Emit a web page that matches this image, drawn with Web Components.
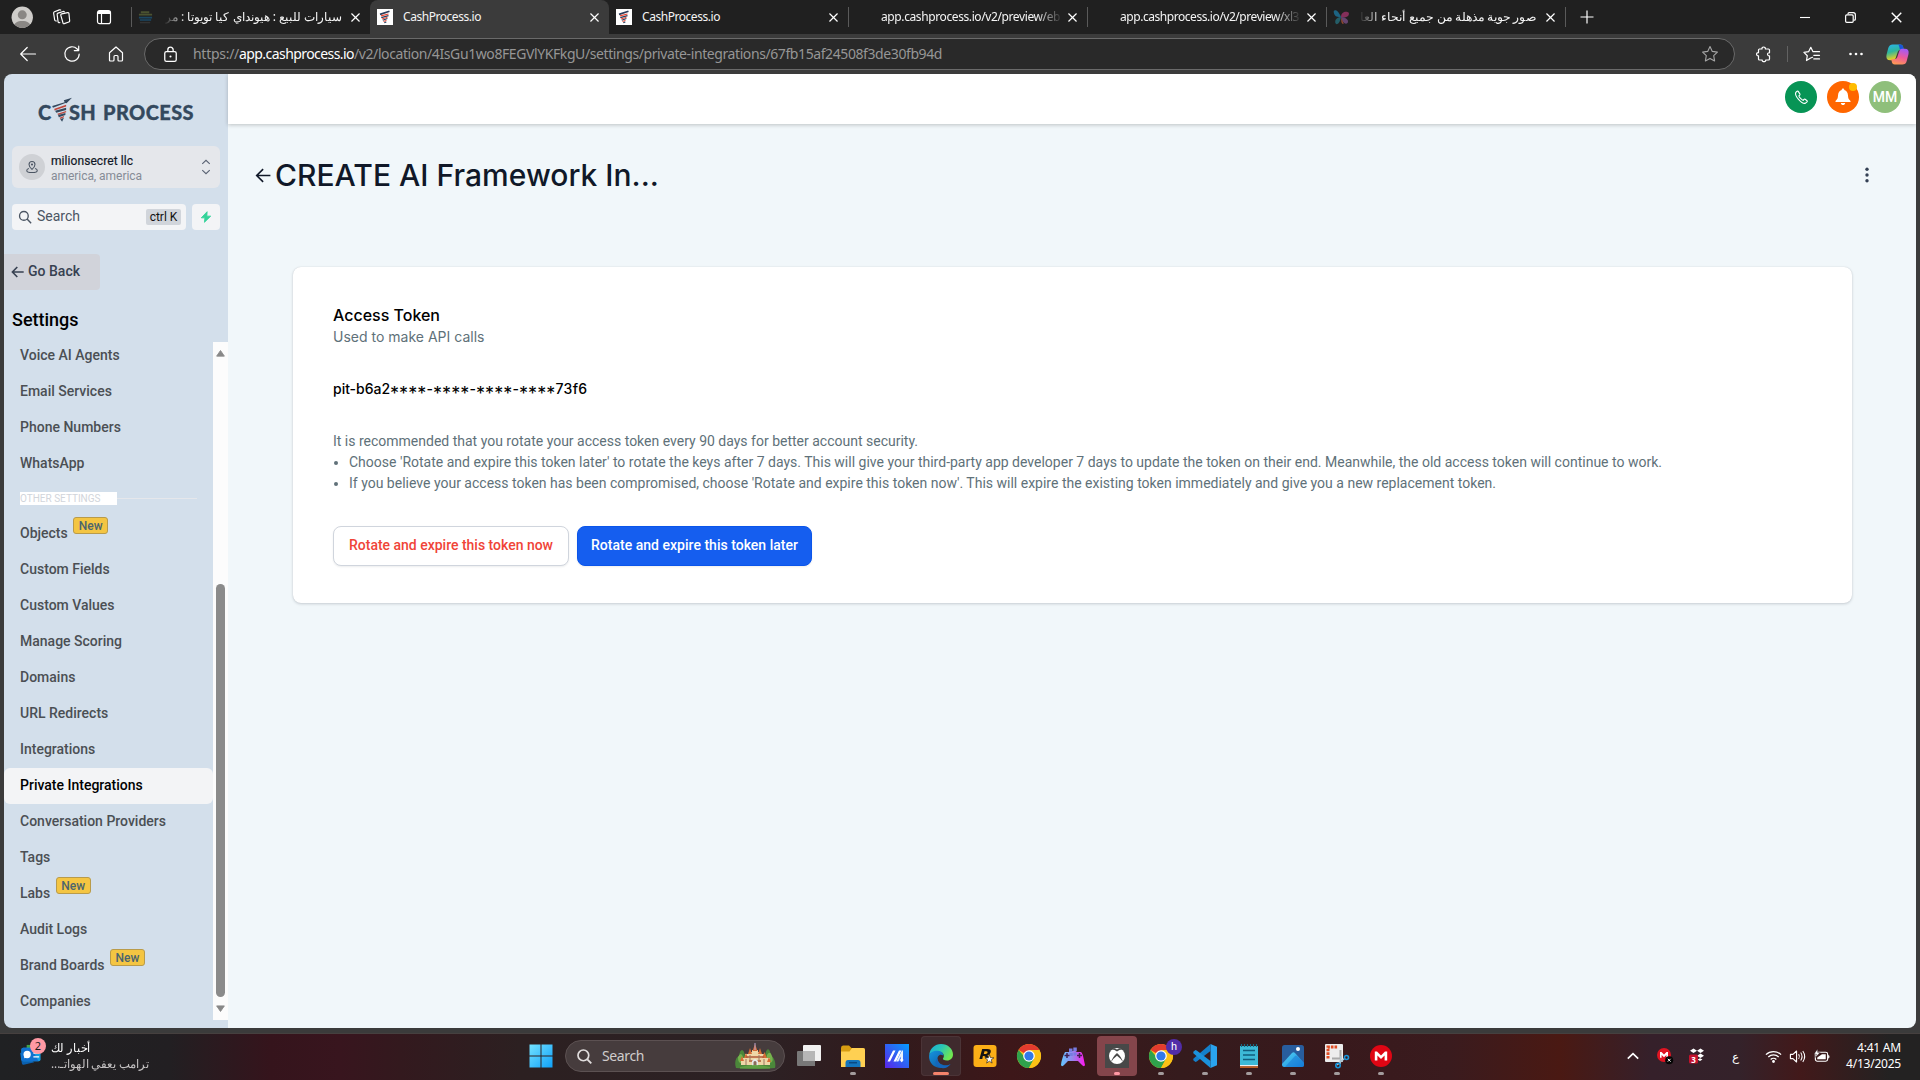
<!DOCTYPE html>
<html lang="en">
<head>
<meta charset="utf-8">
<title>CashProcess.io</title>
<style>
html,body{margin:0;height:100%;overflow:hidden;background:#3b3b3b}
body{font-family:Roboto,"Liberation Sans",sans-serif}
</style>
</head>
<body>
<desktop-screen></desktop-screen>
<script>
const ICONS = {
  avatar:['0 0 24 24','<defs><clipPath id="c"><circle cx="12" cy="12" r="11.4"/></clipPath></defs><circle cx="12" cy="12" r="11.4" fill="#cfcdca"/><g clip-path="url(#c)" fill="#8a8784"><circle cx="12" cy="9.4" r="4.8"/><path d="M3 25v-3c0-4 4-6 9-6s9 2 9 6v3z"/></g>'],
  workspaces:['0 0 16 16','<g fill="none" stroke="#fff" stroke-width="1.1" stroke-linejoin="round"><path d="M8.2 4.6 13.8 3.4q1-.2 1.2.8l.7 6.800q.1 1-.8 1.300l-4.300 1.500q-1 .3-1.200-.7L7.300 5.700q-.1-.9.900-1.100z"/><path d="M6.800 12.600 5.900 12.900q-.9.200-1.100-.7L3.900 5.200q-.1-1 .8-1.300L9.500 2.300q1-.3 1.300.9"/><path d="M3.600 11.300 2.700 11.300q-1 0-1.100-.9L.6 4q-.1-1 .8-1.400L6 .8q1-.3 1.500.5"/></g>'],
  vtabs:['0 0 16 16','<rect x="1.500" y="1.600" width="13" height="13" rx="2.200" fill="none" stroke="#fff" stroke-width="1.200"/><path d="M1.600 3.800a2.200 2.200 0 0 1 2.200-2.200h8.400a2.200 2.200 0 0 1 2.200 2.200V5H1.600z" fill="#fff"/><path d="M5.500 5v9.500" stroke="#fff" stroke-width="1.200"/>'],
  back:['0 0 18 18','<path d="M16.500 9H1.800M8.200 2.500 1.700 9l6.500 6.500" fill="none" stroke="#fff" stroke-width="1.200" stroke-linecap="round" stroke-linejoin="round"/>'],
  reload:['0 0 18 18','<path d="M16.200 9A7.200 7.200 0 1 1 14.200 4L15.500 5.500M15.700 1.200V5.600H11.300" fill="none" stroke="#fff" stroke-width="1.200" stroke-linecap="round" stroke-linejoin="round"/>'],
  home:['0 0 18 18','<path d="M2.500 7.800 9 2l6.500 5.800v7.200q0 1-1 1h-2.500q-1 0-1-1v-3.500q0-1-1-1H8q-1 0-1 1V15q0 1-1 1H3.500q-1 0-1-1z" fill="none" stroke="#fff" stroke-width="1.200" stroke-linejoin="round"/>'],
  lock:['0 0 16 16','<rect x="2.600" y="5.200" width="10.800" height="9.300" rx="1.600" fill="none" stroke="#fff" stroke-width="1.200"/><path d="M5.500 5V3.600a2.500 2.500 0 0 1 5 0V5" fill="none" stroke="#fff" stroke-width="1.200"/><circle cx="8" cy="9.900" r="1" fill="#fff"/>'],
  star:['0 0 18 18','<path d="M9 1.600l2.300 4.800 5.100.7-3.700 3.600.9 5.200L9 13.400 4.400 15.900l.9-5.200L1.600 7.100l5.100-.7z" fill="none" stroke="#a5a5a5" stroke-width="1.100" stroke-linejoin="round"/>'],
  puzzle:['0 0 18 18','<path d="M4 4h3c-.6-2.600 3.800-2.700 3.400 0h3.100q1 0 1 1v2.800c-2.600-.4-2.700 3.200 0 3V14q0 1-1 1h-2.800c.4 2.200-3.900 2.200-3.500 0H4.500q-1 0-1-1v-3.200c-2.500.3-2.600-3.500 0-3.200V5q0-1 1-1" fill="none" stroke="#fff" stroke-width="1.200" stroke-linejoin="round"/>'],
  favs:['0 0 18 18','<path d="M9.600 12.300 7.600 13l-4.100 2.500.8-4.800L.9 7.400l4.700-.7L7.800 2.300l2.200 4.400M10 6.700h6.500M10.800 10.300h5.700M10.800 13.900h5.700" fill="none" stroke="#fff" stroke-width="1.200" stroke-linejoin="round" stroke-linecap="round"/>'],
  dots:['0 0 18 18','<g fill="#fff"><circle cx="3.500" cy="9" r="1.300"/><circle cx="9" cy="9" r="1.300"/><circle cx="14.500" cy="9" r="1.300"/></g>'],
  copilot:['0 0 24 24','<defs><linearGradient id="a" x1="0" y1="0" x2=".3" y2="1"><stop offset="0" stop-color="#2ab4f2"/><stop offset=".5" stop-color="#2fb69b"/><stop offset="1" stop-color="#f5d11c"/></linearGradient><linearGradient id="b" x1=".6" y1="0" x2=".3" y2="1"><stop offset="0" stop-color="#a55af5"/><stop offset=".5" stop-color="#ee5a9b"/><stop offset="1" stop-color="#ff9a52"/></linearGradient></defs><path d="M7 1.500h8q2.200 0 2.800 2.200L18.500 7h-3q-2.500 0-3.200 2.200L10 16q-.8 2-2.600 2H4.500q-5 0-4-5.500l1.800-7Q3.300 1.500 7 1.500z" fill="url(#a)"/><path d="M12.500 1.500H15q2.200 0 2.800 2.200L18.500 7h-4q-1-5.500-2-5.500z" fill="#1a54d8"/><path d="M17 22.500H9q-2.200 0-2.800-2.200L5.500 17h3q2.500 0 3.200-2.200L14 8q.8-2 2.600-2h2.900q5 0 4 5.500l-1.800 7q-1 4-4.700 4z" fill="url(#b)"/>'],
  close:['0 0 12 12','<path d="M1.600 1.600l8.800 8.800M10.400 1.600 1.600 10.400" stroke="#fff" stroke-width="1.300"/>'],
  plus:['0 0 14 14','<path d="M7 .5v13M.5 7h13" stroke="#fff" stroke-width="1.200"/>'],
  min:['0 0 12 12','<path d="M1 6.500h10" stroke="#fff" stroke-width="1.100"/>'],
  restore:['0 0 12 12','<g fill="none" stroke="#fff" stroke-width="1.100"><rect x="1.500" y="3.500" width="7" height="7" rx="1"/><path d="M3.700 3V2.500q0-1 1-1h3.800q2 0 2 2v4q0 1-1 1H9"/></g>'],
  fav1:['0 0 16 16','<path d="M3 2.500h9v2H3zM1 5h14v1.800H1z" fill="#4a5230"/><path d="M1 8.200h14v1.800H1zM2 10.800h12v1.600H2z" fill="#1b4763"/><path d="M2 14.500h11" stroke="#333" stroke-width="1.500"/>'],
  cash:['0 0 16 16','<rect width="16" height="16" fill="#fff"/><path d="M3 5.400 12.500 2.300" stroke="#2b3d5c" stroke-width="1.700"/><path d="M4 6.900 11.500 5" stroke="#e8432f" stroke-width="1.200"/><path d="M4.300 8.700 11.500 6.600M5.800 11.200l4.600-1.700M7.300 13.700l2-.8" stroke="#2b3d5c" stroke-width="1.200"/><path d="M5 10l5.500-1.700M6.500 12.500l3-1.100" stroke="#e8432f" stroke-width="1"/>'],
  msn:['0 0 16 16','<path d="M8 8C5 0 0 0 .8 3.500 1.500 8 5 8 8 8z" fill="#1d6382"/><path d="M8 8C5.500 8 2 9.800 2.200 13c.3 4 4.500 2.500 5.800-5z" fill="#245d67"/><path d="M8 8c0-6 6-6 7.500-4.500S15 10 8 8z" fill="#842f5a"/><path d="M8 8c2 0 7 1.200 7 4.500S9.500 16 8 8z" fill="#65446f"/><path d="M8.200 8.600l2.500 6.200q-3 1-2.500-6.200z" fill="#914930"/>'],
  pin:['0 0 16 16','<g fill="none" stroke="#4b5563" stroke-width="1.200"><path d="M8 10.800S4.600 7.700 4.600 5.100a3.400 3.400 0 0 1 6.800 0C11.400 7.700 8 10.800 8 10.800z"/><path d="M4.500 9.700C3 10.100 2 10.900 2 11.900c0 1.500 2.700 2.400 6 2.400s6-.9 6-2.400c0-1-1-1.800-2.500-2.200"/></g><circle cx="8" cy="5.100" r="1.200" fill="#4b5563"/>'],
  updown:['0 0 12 18','<path d="M1.500 5.500 6 1.500l4.500 4M1.500 12.500l4.500 4 4.500-4" fill="none" stroke="#596273" stroke-width="1.400"/>'],
  search:['0 0 16 16','<circle cx="6.500" cy="6.500" r="4.800" fill="none" stroke="#4b5563" stroke-width="1.500"/><path d="M10 10l4.500 4.500" stroke="#4b5563" stroke-width="1.600"/>'],
  bolt:['0 0 14 14','<path d="M8.300.8 1.500 8h4.200l-.5 5.200L12.500 6H8z" fill="#34d399" stroke="#34d399" stroke-linejoin="round"/>'],
  goback:['0 0 14 14','<path d="M12.700 7H1.500M6.300 2 1.400 7l4.900 5" fill="none" stroke="#374151" stroke-width="1.600"/>'],
  arrow:['0 0 18 18','<path d="M16.300 9H2M8.600 2.200 1.800 9l6.800 6.800" fill="none" stroke="#101828" stroke-width="1.700"/>'],
  kebab:['0 0 18 18','<g fill="#344054"><circle cx="9" cy="3.300" r="1.700"/><circle cx="9" cy="9" r="1.700"/><circle cx="9" cy="14.700" r="1.700"/></g>'],
  phone:['0 0 16 16','<path d="M3 1.500 1.800 2.900c-1.300 3.200 6 11.900 10.100 11.400l2-1.600c.4-.4.400-.9 0-1.300l-2-1.500c-.5-.3-1-.2-1.300.2l-.8 1C8 10.600 5.700 7.800 5.200 6.200l.9-.8c.4-.4.400-.8.100-1.300L4.700 1.700c-.4-.6-1.100-.7-1.700-.2z" fill="none" stroke="#fff" stroke-width="1.200" stroke-linejoin="round"/>'],
  bell:['0 0 18 18','<path d="M9 .6c.9 0 1.300.6 1.300 1.400 2.500.8 3.500 2.700 3.700 5.500.1 2.700.7 3.900 2.500 5.500v1H1.500v-1c1.800-1.600 2.400-2.800 2.500-5.500.2-2.800 1.200-4.700 3.700-5.500C7.700 1.200 8.100.6 9 .6zM6.800 15h4.400c-.3 1.400-1 2-2.200 2s-1.900-.6-2.200-2z" fill="#fff"/>'],
  up:['0 0 10 8','<path d="M5 .6 9.300 7H.7z" fill="#888" stroke="#888" stroke-linejoin="round"/>'],
  down:['0 0 10 8','<path d="M5 7.400 9.300 1H.7z" fill="#888" stroke="#888" stroke-linejoin="round"/>'],
  widgets:['0 0 24 24','<path d="M8 2h12v8H8z" fill="#43a047"/><path d="M1 10 3 21q.3 2 2 1.700L16 20z" fill="#0b5fae"/><rect x="2.500" y="5" width="20" height="14" rx="2" fill="#149de0"/><path d="M4.500 5h8l8 14h-16a2 2 0 0 1-2-2V7a2 2 0 0 1 2-2z" fill="#1070cf"/><circle cx="8.500" cy="12" r="3.800" fill="#fff"/><path d="M5.500 12v4l4-1z" fill="#fff"/><path d="M15 10.500h6M15 14.500h6" stroke="#fff" stroke-width="1.500"/>'],
  windows:['0 0 24 24','<defs><linearGradient id="w" x1="0" y1="0" x2="1" y2="1"><stop offset="0" stop-color="#74e2ff"/><stop offset="1" stop-color="#0fa0f8"/></linearGradient></defs><path d="M.5.500h11v11H.5zM12.500.500h11v11h-11zM.5 12.500h11v11H.5zM12.500 12.500h11v11h-11z" fill="url(#w)"/>'],
  tsearch:['0 0 18 18','<circle cx="7.800" cy="7.800" r="5.700" fill="none" stroke="#e1dddd" stroke-width="1.800"/><path d="M12 12l4.200 4.200" stroke="#e1dddd" stroke-width="2"/>'],
  castle:['0 0 42 26','<path d="M2 25C0 19 2 14 5 13c1-8 5-8 6 0h20c1-9 5-9 6 0 4 2 5 8 4 12q-20 2-39 0z" fill="#4b873a"/><path d="M4 14q3-6 5 0 3 5-1 6t-4-6zM33 12q3-5 5 1 2 6-2 7t-3-8z" fill="#76b34d"/><path d="M7 22v-7h4v-4h4V9h3V7h6v2h3v2h4v4h5v7z" fill="#eed7a7"/><path d="M10 15l2-5 2 5zM14 11l2-6 2 6zM18.500 8 21 1l2.500 7zM24 11l2-6 2 6zM28 15l2.500-6 2.500 6zM6 18l2-5 2 5zM33 19l2-5 2 5z" fill="#d66c35"/><path d="M21 0v7" stroke="#b7a3d1" stroke-width="1"/><path d="M12 14h18M15 18h12" stroke="#b35b3a" stroke-width="1.500"/><path d="M12 16v6M16 12v5M25 12v5M30 16v6" stroke="#9b7862"/><path d="M18 24v-6q3-4 6 0v6z" fill="#e5e8ea"/><path d="M19.500 22v-3q1.500-2 3 0v3z" fill="#8b6c58"/><path d="M6 24q15-4 30 0v1.500H6z" fill="#61a044"/>'],
  taskview:['0 0 24 24','<rect x="6" y="1" width="18" height="16" rx="1" fill="#f1f1f1"/><path d="M1 7h17v15H1q-1 0-1-1V8q0-1 1-1z" fill="#787878"/><path d="M6 7h12v10H6z" fill="#b6b6b6"/>'],
  folder:['0 0 24 24','<path d="M0 4q0-2.500 2-2.500h6L10.500 4H22q2 0 2 2v8H0z" fill="#d89d12"/><path d="M0 7.500h8.500L11 4h11q2 0 2 2v17H0z" fill="#ffd052"/><path d="M4.500 23v-4q0-3 2.500-3h10q2.500 0 2.500 3v4z" fill="#1475bd"/><path d="M8 18.700h8" stroke="#0a4a83" stroke-width="1.500"/>'],
  ma:['0 0 24 24','<defs><linearGradient id="m" x1="0" y1="1" x2="1" y2="0"><stop offset="0" stop-color="#5b25e8"/><stop offset="1" stop-color="#049dff"/></linearGradient></defs><path d="M0 0h24v24H0z" fill="url(#m)"/><path d="M2.500 17.500 8 6.500h2.500l-5.500 11zM8.500 17.500 14 6.500h2.500l-5.500 11z" fill="#fff"/><path d="M18 6.500v11h-2.300v-5l-2.300 5h-2.200L17 6.500z" fill="#e8f2ff"/><path d="m16.500 13.500.7 1.800 1.800.7-1.800.7-.7 1.800-.7-1.800-1.800-.7 1.800-.7z" fill="#fff"/>'],
  edge:['0 0 24 24','<defs><linearGradient id="e" x1="0" y1="0" x2="1" y2=".5"><stop offset="0" stop-color="#18a9dc"/><stop offset=".5" stop-color="#2ac7b5"/><stop offset="1" stop-color="#70e751"/></linearGradient><linearGradient id="f" x1="0" y1="0" x2="1" y2="1"><stop offset="0" stop-color="#1595df"/><stop offset="1" stop-color="#0d4d99"/></linearGradient></defs><path d="M.2 11C1 4 6 0 12 0c7 0 12 5 12 10.500 0 3.500-2.500 6-6 6-3 0-4.500-1.200-4-2 2-2.700.5-6-3-6.500C6.500 7.500 2 8 .2 11z" fill="url(#e)"/><path d="M.1 11.500C1 8.500 4.500 6.500 9 6.800c3.500.2 5.500 2.400 5.300 4.700C10.500 9 8 12.500 8.600 15.500 9.200 19 13 21.500 17 21.300c1.500 0 3-.6 4.300-1.100C19 23 15.800 24 12 24 5 24-.5 18.500.1 11.500z" fill="url(#f)"/><path d="M8.500 14.500c-.2 4.500 4 7.500 8.500 7 2-.2 3.600-.8 4.700-1.600C18.500 24.500 13 25.500 9 22.500c-3-2.500-3-6-.5-8z" fill="#1565ba"/>'],
  rockstar:['0 0 24 24','<rect x=".5" y="1" width="23" height="22" rx="3" fill="#fcaf17"/><path d="M9.200 5h5q4.600 0 3.400 3.400-.7 2.300-3.200 2.900 1.200.8 1 2.800h-2.900q.2-2.200-1.700-2.200h-.9L9.300 15H6.400zM11.500 7.300l-.7 2.600h2.100q1.900-.2 1.700-1.600-.1-1-1.400-1z" fill="#161313" fill-rule="evenodd"/><path d="m16.500 10.500 1 3.200 3.400.1-2.700 2 .9 3.300-2.700-1.900-2.800 1.900 1-3.300-2.700-2h3.500z" fill="#fff" stroke="#161313" stroke-width=".6"/>'],
  chrome:['0 0 24 24','<circle cx="12" cy="12" r="12" fill="#fbc116"/><path d="M12 12 1.600 6A12 12 0 0 1 22.400 6z" fill="#e33b2e"/><path d="M12 12H6.800L1.600 6A12 12 0 0 0 12 24l4.800-9z" fill="#2fa24c"/><path d="M12 6h10.400A12 12 0 0 1 12 24l5.200-9z" fill="#fbc116"/><circle cx="12" cy="12" r="5.800" fill="#fff"/><circle cx="12" cy="12" r="4.600" fill="#3179ea"/>'],
  gamepad:['0 0 24 24','<defs><linearGradient id="g"><stop offset="0" stop-color="#62c7ff"/><stop offset=".5" stop-color="#9a83ed"/><stop offset="1" stop-color="#ff16ef"/></linearGradient></defs><path d="M4 8h4.500l2-1h4l1.500 1H20q1.500 1 2.500 6t1.500 7q-.5 2-2.500.5L17 17H7l-4.500 4.500Q.5 23 0 21q.2-3 1.500-7T4 8z" fill="url(#g)"/><path d="M8 4.500h3.500V8H8zM12.300 3.500h3.500V7h-3.500zM8.500 9h3.300v3H8.500zM12.500 8.500h3v3h-3z" fill="#777ce2"/><path d="M6 9v5M3.500 11.500h5M18.500 9v5M16 11.500h5" stroke="#402052" stroke-width="1.500"/>'],
  xbox:['0 0 24 24','<path d="M0 0h24v24H0z" fill="#484848"/><circle cx="12" cy="12" r="8" fill="#fff"/><path d="M6.800 5.600q2.400-.2 5.200 2 2.800-2.200 5.200-2-2-1.600-2.800-1.300L12 5.500 9.600 4.300q-.8-.3-2.800 1.300z" fill="#484848"/><path d="M6 18.300q1.500-5.500 6-9.300 4.500 3.800 6 9.300-2-3.800-6-6.600-4 2.800-6 6.600z" fill="#484848"/>'],
  vscode:['0 0 24 24','<path d="M17.500 0 24 2.800v18.400L17.500 24z" fill="#2aa3ee"/><path d="M17.500 0v7L3.700 17.500 2.500 18 .3 16.200v-1.400z" fill="#1480cb"/><path d="M17.500 24v-7L3.700 6.500 2.500 6 .3 7.800v1.400z" fill="#1b92dc"/>'],
  notepad:['0 0 24 24','<path d="M3 2h18v19H3z" fill="#3db9d7"/><path d="M3 21h18v1.500H3z" fill="#eee"/><path d="M3 22.300h18V24H3z" fill="#bc5d22"/><path d="M6 6.500h12M6 11h12M6 15.500h12" stroke="#115d7d" stroke-width="1.400"/><path d="M4.500 0v3M7.500 0v3M10.500 0v3M13.500 0v3M16.500 0v3M19.500 0v3" stroke="#176983" stroke-width="1.200"/>'],
  photos:['0 0 24 24','<defs><linearGradient id="p" x1="0" y1="0" x2="1" y2="1"><stop offset="0" stop-color="#55d5f4"/><stop offset="1" stop-color="#1484df"/></linearGradient></defs><rect x="1" y="1" width="22" height="22" rx="2.500" fill="#285d9e"/><path d="M1 20 11 9q1.500-1.500 3 0l9 10v1.500q0 2.500-2.500 2.500h-17Q1 23 1 20z" fill="url(#p)"/><path d="M4 23 14 12q1-1 2 0l7 7v1.500q0 2.500-2.500 2.500z" fill="#1576d2" opacity=".5"/><circle cx="17" cy="5" r="2" fill="#fff"/>'],
  snip:['0 0 24 24','<rect x="0" y="0" width="18" height="18" rx="1" fill="#ededed"/><path d="M3 14.500V3h10" fill="none" stroke="#df4d26" stroke-width="3" stroke-dasharray="2.600 1"/><path d="M7 14.500h8.500V6" fill="none" stroke="#aaa" stroke-width="2"/><path d="M12 21l8-7M16 12l-1 8" stroke="#aac4d2" stroke-width="1.500"/><circle cx="13" cy="21.500" r="2.200" fill="none" stroke="#1795db" stroke-width="1.600"/><circle cx="21.500" cy="13.500" r="2" fill="none" stroke="#1795db" stroke-width="1.600"/>'],
  mega:['0 0 24 24','<circle cx="12" cy="12" r="11" fill="#df0614"/><path d="M5.800 16.500v-9H8l4 4 4-4h2.200v9h-2.600v-5L12 15l-3.600-3.500v5z" fill="#fff"/>'],
  chev:['0 0 14 14','<path d="m1.800 9.600 5.200-5 5.200 5" fill="none" stroke="#fff" stroke-width="1.700"/>'],
  megaoff:['0 0 18 18','<circle cx="8" cy="8" r="7" fill="#e01422"/><path d="M4 10.700V5h1.500L8 7.500 10.500 5H12v5.700h-1.600V7.900L8 10.200 5.600 7.900v2.800z" fill="#fff"/><circle cx="13.200" cy="13.200" r="4" fill="#050505"/><path d="m11.800 11.800 2.800 2.800m0-2.800-2.800 2.800" stroke="#fff" stroke-width="1"/>'],
  dropbox:['0 0 18 18','<path d="M5.500 1.500 9 3.700 5.500 6 2 3.700zM12.500 1.500 16 3.700 12.500 6 9 3.700zM12.500 6.500 16 8.800 12.500 11 9 8.800zM9.500 12.500l2.500-1.200 2.500 1.200-2.500 1.500z" fill="#fff"/><rect x="1" y="7.500" width="9" height="9" rx="1.500" fill="#c4122c"/>'],
  wifi:['0 0 18 18','<path d="M1 7a11.500 11.500 0 0 1 16 0M3.500 9.600a7.900 7.900 0 0 1 11 0M6 12.200a4.300 4.300 0 0 1 6 0" fill="none" stroke="#fff" stroke-width="1.400"/><circle cx="9" cy="14.300" r="1.500" fill="#fff"/>'],
  sound:['0 0 18 18','<path d="M1.500 6.800h2.700L8 3.200v11.600l-3.800-3.600H1.500z" fill="none" stroke="#fff" stroke-width="1.200" stroke-linejoin="round"/><path d="M10.200 6.500q1.600 2.500 0 5M12.400 4.800q2.800 4.200 0 8.400M14.600 3.200q4 5.800 0 11.600" fill="none" stroke="#fff" stroke-width="1.100"/>'],
  battery:['0 0 18 18','<rect x="2.500" y="4.500" width="13" height="9.500" rx="2" fill="none" stroke="#fff" stroke-width="1.200"/><path d="M9.500 6.500h4v5.500H4.500v-2zM16 7.500q1.500.2 1.500 1.800T16 11z" fill="#fff"/><path d="M4.800 1 1 6.500h2.500L2.500 10 7.500 4.800H5z" fill="#fff" stroke="#30171b" stroke-width=".5"/>'],
  logo:['0 0 30 36','<path d="m3 13 17-5.500-1.200-2.800L30 1l-7.500 8-1.500-.5L4 15.500z" fill="#34495e"/><path d="M6 17 22 11v2.500L6 19.500z" fill="#c0473c"/><path d="m7 19.800 15-4.300v3.300L8.500 22.500z" fill="#34495e"/><path d="m10 24 12-4v1.800l-11 4z" fill="#c0473c"/><path d="m11 26 10-3v3L12 29z" fill="#34495e"/><path d="m13 30 6-2.500V29l-5 2.500z" fill="#c0473c"/><path d="m14 32 5-2-2.500 5.500z" fill="#34495e"/>']
};
function define(name, markup, setup){
  const t=document.createElement('template'); t.innerHTML=markup;
  customElements.define(name, class extends HTMLElement{
    constructor(){ super(); this.attachShadow({mode:'open'}).append(t.content.cloneNode(true)); }
    connectedCallback(){ if(setup && !this.ready){ this.ready=true; setup(this,this.shadowRoot); } }
  });
}
const UI='"Noto Sans","Open Sans",sans-serif';

/* name, w, h: one glyph from the ICONS table */
define('ui-icon','<style>:host{display:block;flex:none}svg{display:block;width:100%;height:100%;overflow:visible}</style>',(el,root)=>{
  const [vb,body]=ICONS[el.getAttribute('name')]; const w=el.getAttribute('w')||16, h=el.getAttribute('h')||w;
  el.style.width=w+'px'; el.style.height=h+'px';
  root.innerHTML+=`<svg viewBox="${vb}" preserveAspectRatio="none">${body}</svg>`;
});
/* w: line width in px; tracking adapts to it, joined scripts are scaled */
define('fit-text','<style>:host{display:block;flex:none;white-space:pre}span{display:inline-block;white-space:pre;transform-origin:0 50%}:host([right]) span{transform-origin:100% 50%}</style><span><slot></slot></span>',(el,root)=>{
  const s=root.querySelector('span'), w=+el.getAttribute('w'); el.style.width=w+'px';
  const nat=s.getBoundingClientRect().width, n=[...el.textContent].length;
  if(el.hasAttribute('scale')) s.style.transform=`scaleX(${w/nat})`;
  else s.style.letterSpacing=((w-nat)/n)+'px';
});

define('browser-tab',`<style>
:host{display:flex;box-sizing:border-box;width:239px;height:34px;padding-left:7px;align-items:center;flex:none;color:#f4f4f4;font:12px/18px ${UI}}
.icon{width:16px;height:16px;margin-right:10px;flex:none}
.t{width:180px;overflow:hidden;flex:none}
:host([fade]) .t{-webkit-mask-image:linear-gradient(90deg,#000 155px,transparent 182px)}
:host([rtl]) .t{margin-left:1px;width:179px;-webkit-mask-image:linear-gradient(270deg,#000 158px,transparent 180px)}
:host([active]){background:#3b3b3b;border-radius:8px 8px 0 0;}
i{width:1px;height:20px;background:#5a5a5a;margin-left:auto;margin-right:-1px}
:host([nosep]) i{display:none}
ui-icon{flex:none}.x{margin-left:6px}
</style><div class="icon"><slot name="icon"></slot></div><div class="t"><slot></slot></div><ui-icon class="x" name="close" w="11"></ui-icon><i></i>`);

define('title-bar',`<style>
:host{display:flex;height:34px;background:#202020;align-items:center}
.lead{display:flex;width:131px;align-items:center;box-sizing:border-box;padding-left:11px;flex:none}
.lead ui-icon{flex:none}.lead i{width:1px;height:20px;background:#5a5a5a;margin-left:auto;margin-right:-1px}
.win{display:flex;margin-left:auto;padding-right:17px;gap:33px;align-items:center}
</style>
<div class="lead"><ui-icon name="avatar" w="22.500"></ui-icon><ui-icon name="workspaces" w="17" style="margin-left:19px"></ui-icon><ui-icon name="vtabs" w="16" style="margin-left:26px"></ui-icon><i></i></div>
<browser-tab rtl nosep><ui-icon slot="icon" name="fav1" w="15"></ui-icon><fit-text w="177" scale dir="rtl" style="direction:ltr">سيارات للبيع : هيونداي كيا تويوتا : مر</fit-text></browser-tab>
<browser-tab active nosep><ui-icon slot="icon" name="cash"></ui-icon><fit-text w="78">CashProcess.io</fit-text></browser-tab>
<browser-tab><ui-icon slot="icon" name="cash"></ui-icon><fit-text w="78">CashProcess.io</fit-text></browser-tab>
<browser-tab fade><fit-text w="179">app.cashprocess.io/v2/preview/eb</fit-text></browser-tab>
<browser-tab fade><fit-text w="179">app.cashprocess.io/v2/preview/xl3</fit-text></browser-tab>
<browser-tab rtl><ui-icon slot="icon" name="msn"></ui-icon><fit-text w="176" scale style="direction:ltr">صور جوية مذهلة من جميع أنحاء العا</fit-text></browser-tab>
<ui-icon name="plus" w="14" style="margin-left:15px"></ui-icon>
<div class="win"><ui-icon name="min" w="12"></ui-icon><ui-icon name="restore" w="13"></ui-icon><ui-icon name="close" w="13"></ui-icon></div>`);

define('address-bar',`<style>
:host{display:flex;height:40px;background:#3b3b3b;align-items:center;padding-left:19px}
.nav{display:flex;gap:26px;width:125px;flex:none}
.url{display:flex;box-sizing:border-box;width:1591px;height:32px;border:1px solid #6a6a6a;border-radius:16px;background:#292929;align-items:center;padding:0 15px 0 17px;font:14px/20px ${UI};color:#969696;flex:none}
.right{display:flex;align-items:center}
</style>
<div class="nav"><ui-icon name="back" w="18"></ui-icon><ui-icon name="reload" w="18"></ui-icon><ui-icon name="home" w="18"></ui-icon></div>
<div class="url"><ui-icon name="lock" w="17" style="margin-right:14px"></ui-icon><fit-text w="46">https://</fit-text><fit-text w="115" style="color:#fff">app.cashprocess.io</fit-text><fit-text w="588">/v2/location/4IsGu1wo8FEGVlYKFkgU/settings/private-integrations/67fb15af24508f3de30fb94d</fit-text><ui-icon name="star" w="18" style="margin-left:auto"></ui-icon></div>
<div class="right"><ui-icon name="puzzle" w="18" style="margin-left:20px"></ui-icon><i style="width:1px;height:16px;background:#626262;margin:0 15px 0 14px"></i><ui-icon name="favs" w="18"></ui-icon><ui-icon name="dots" w="18" style="margin-left:26px"></ui-icon><ui-icon name="copilot" w="23" style="margin-left:21px"></ui-icon></div>`);

define('nav-item',`<style>
:host{display:flex;box-sizing:border-box;height:36px;align-items:center;padding:0 0 2px 16px;font:500 14px/20px Roboto,sans-serif;color:#4b4f54;border-radius:6px;flex:none}
:host([active]){background:#f3f4f6;color:#000}
b{display:none;align-self:flex-start;box-sizing:border-box;height:17px;width:35px;text-align:center;margin:1px 0 0 5.500px;border:1px solid #b99b4a;border-radius:3px;background:#f4c542;color:#4b646e;font:500 12px/16px Roboto,sans-serif}
:host([new]) b{display:block}
</style><slot></slot><b>New</b>`);

define('side-bar',`<style>
:host{display:flex;flex-direction:column;width:224px;background:#d3dfeb;flex:none;box-sizing:border-box}
.logo{display:flex;height:24px;margin:24px 0 0 34px;align-items:flex-end;color:#34495e;font:900 20px/18px Lato,sans-serif;-webkit-text-stroke:.3px #34495e}
.logo fit-text{margin-bottom:1px}
.loc{display:flex;box-sizing:border-box;width:208px;height:42px;margin:24px 0 0 8px;padding:0 9px 0 7px;border-radius:6px;background:#e5e7eb;align-items:center;font:12px/15px Roboto,sans-serif;color:#858b96}
.pin{width:26px;height:26px;border-radius:50%;background:#cfd1d5;display:grid;place-items:center;margin-right:6px}
.find{display:flex;margin:16px 0 0 8px;gap:6px}
.box{display:flex;box-sizing:border-box;height:26px;border-radius:4px;background:#f3f4f6;align-items:center;font:14px/20px Roboto,sans-serif;color:#4b5563}
kbd{box-sizing:border-box;width:35px;height:16px;border-radius:2px;background:#d1d5db;color:#111;font:12px/16px Roboto,sans-serif;text-align:center;margin-left:auto}
.back{display:flex;box-sizing:border-box;width:96px;height:36px;margin-top:24px;padding:0 0 2px 7px;gap:3px;border-radius:0 4px 4px 0;background:#d1d3da;align-items:center;font:500 14px/20px Roboto,sans-serif;color:#374151}
.back ui-icon{position:relative;top:1px}
h2{margin:18px 0 0 8px;height:34px;font:500 18px/24px Roboto,sans-serif;color:#000}
.scroll{display:flex;height:678px;overflow:hidden}
.list{display:flex;flex-direction:column;width:209px;margin-top:-4px}
.div{display:flex;box-sizing:border-box;height:34px;align-items:center;padding:0 16px 1px;flex:none}
.div span{width:97px;height:13px;background:#fff;font:10px/13px Roboto,sans-serif;color:#d1d5db}
.div i{flex:1;height:1px;background:#e5e7eb}
.bar{display:flex;flex-direction:column;width:15px;background:#fcfcfc;align-items:center;box-sizing:border-box;padding:8px 0;height:678px}
.thumb{width:9px;height:413px;border-radius:5px;background:#8b8b8b;margin:auto 0 8px}
</style>
<div class="logo"><fit-text w="13">C</fit-text><ui-icon name="logo" w="22" h="25" style="margin:0 -3px 0 -1px"></ui-icon><fit-text w="27">SH</fit-text><fit-text w="91" style="margin-left:7px">PROCESS</fit-text></div>
<div class="loc"><div class="pin"><ui-icon name="pin" w="14"></ui-icon></div><div style="padding-top:3px"><fit-text w="82" style="color:#111827;-webkit-text-stroke:.2px #111827">milionsecret llc</fit-text><fit-text w="91">america, america</fit-text></div><ui-icon name="updown" w="10" h="16" style="margin-left:auto;margin-right:0"></ui-icon></div>
<div class="find"><div class="box" style="width:174px;padding:0 5px 0 6px"><ui-icon name="search" w="14.500" style="margin-right:4.500px"></ui-icon><fit-text w="43" style="padding-bottom:2px">Search</fit-text><kbd>ctrl K</kbd></div><div class="box" style="width:28px;justify-content:center"><ui-icon name="bolt" w="12"></ui-icon></div></div>
<div class="back"><ui-icon name="goback" w="14"></ui-icon><fit-text w="52">Go Back</fit-text></div>
<h2><fit-text w="66.500">Settings</fit-text></h2>
<div class="scroll"><div class="list">
<nav-item>Voice AI Agents</nav-item><nav-item>Email Services</nav-item><nav-item>Phone Numbers</nav-item><nav-item>WhatsApp</nav-item>
<div class="div"><span><fit-text w="80.500">OTHER SETTINGS</fit-text></span><i></i></div>
<nav-item new>Objects</nav-item><nav-item>Custom Fields</nav-item><nav-item>Custom Values</nav-item><nav-item>Manage Scoring</nav-item><nav-item>Domains</nav-item><nav-item>URL Redirects</nav-item><nav-item>Integrations</nav-item><nav-item active>Private Integrations</nav-item><nav-item>Conversation Providers</nav-item><nav-item>Tags</nav-item><nav-item new>Labs</nav-item><nav-item>Audit Logs</nav-item><nav-item new>Brand Boards</nav-item><nav-item>Companies</nav-item>
</div><div class="bar"><ui-icon name="up" w="9" h="7"></ui-icon><div class="thumb"></div><ui-icon name="down" w="9" h="7"></ui-icon></div></div>`);

define('round-button',`<style>
:host{display:grid;place-items:center;width:32px;height:32px;border-radius:50%;background:var(--bg);color:#fff;font:500 14px/32px Roboto,sans-serif;position:relative}
.dot{display:none;position:absolute;right:2px;top:2px;width:8px;height:8px;border-radius:50%;background:#ffbc00}
:host([dot]) .dot{display:block}</style><slot></slot><span class="dot"></span>`);

define('app-header',`<style>:host{display:flex;box-sizing:border-box;height:50px;background:#fff;padding:7px 15px 0 0;gap:10px;justify-content:flex-end;box-shadow:0 1px 4px rgba(0,0,0,.22);flex:none;z-index:1}</style>
<round-button style="--bg:#079455"><ui-icon name="phone" w="15"></ui-icon></round-button>
<round-button dot style="--bg:#ff6600"><ui-icon name="bell" w="18"></ui-icon></round-button>
<round-button style="--bg:#8fbf7b">MM</round-button>`);

define('action-button',`<style>
:host{display:flex;box-sizing:border-box;height:40px;border:1px solid #d0d5dd;border-radius:8px;background:#fff;color:#f04438;align-items:center;justify-content:center;font:500 14px/20px Roboto,sans-serif;box-shadow:0 1px 2px rgba(16,24,40,.08);padding-bottom:2px}
:host([primary]){background:#155eef;border-color:#0b55ea;color:#fff}
</style><slot></slot>`);

define('token-card',`<style>
:host{display:flex;flex-direction:column;box-sizing:border-box;height:336px;margin:0 64px 0 65px;background:#fff;border-radius:8px;box-shadow:0 1px 3px rgba(16,24,40,.18),0 0 1px rgba(16,24,40,.15);padding:37px 40px 0;font:14px/21px Roboto,sans-serif;color:#607179}
.h{font:500 16px/22px Inter,sans-serif;color:#000}
.s{font:14px/21px Inter,sans-serif}
.k{display:flex;font:500 14px/21px Inter,sans-serif;color:#000;margin:31px 0 32px}
.a{position:relative;top:4.500px;font-size:18px;font-weight:400}
ul{margin:0;padding-left:16px}
.btns{display:flex;gap:8px;margin-top:32px}
</style>
<fit-text w="107" class="h">Access Token</fit-text><fit-text w="151.500" class="s">Used to make API calls</fit-text>
<div class="k"><fit-text w="57">pit-b6a2</fit-text><fit-text w="36.500" class="a">****</fit-text><fit-text w="6.500">-</fit-text><fit-text w="36.500" class="a">****</fit-text><fit-text w="6.500">-</fit-text><fit-text w="36.500" class="a">****</fit-text><fit-text w="6.500">-</fit-text><fit-text w="36.500" class="a">****</fit-text><fit-text w="32">73f6</fit-text></div>
<fit-text w="585">It is recommended that you rotate your access token every 90 days for better account security.</fit-text>
<ul><li><fit-text w="1313">Choose 'Rotate and expire this token later' to rotate the keys after 7 days. This will give your third-party app developer 7 days to update the token on their end. Meanwhile, the old access token will continue to work.</fit-text></li>
<li><fit-text w="1147">If you believe your access token has been compromised, choose 'Rotate and expire this token now'. This will expire the existing token immediately and give you a new replacement token.</fit-text></li></ul>
<div class="btns"><action-button style="width:236px"><fit-text w="204">Rotate and expire this token now</fit-text></action-button><action-button primary style="width:235px"><fit-text w="207">Rotate and expire this token later</fit-text></action-button></div>`);

define('main-view',`<style>
:host{display:flex;flex-direction:column;flex:1;background:#f1f7fa}
.head{display:flex;align-items:center;height:40px;margin:31px 40px 72px 27px}
.title{font:500 30px/40px Inter,sans-serif;color:#101828}
</style><app-header></app-header>
<div class="head"><ui-icon name="arrow" w="17"></ui-icon><fit-text w="384" class="title" style="margin-left:3px">CREATE AI Framework In...</fit-text><ui-icon name="kebab" w="18" h="18" style="margin-left:auto"></ui-icon></div>
<token-card></token-card>`);

/* run: indicator under the icon */
define('task-icon',`<style>
:host{display:grid;place-items:center;width:40px;height:40px;margin:0 2px;border-radius:4px;box-sizing:border-box;position:relative;flex:none;--ind:#a39c9d;--iw:6px}
.i{display:none;position:absolute;bottom:1px;left:calc(50% - var(--iw)/2);width:var(--iw);height:3px;border-radius:2px;background:var(--ind)}
:host([run]) .i{display:block}
::slotted(.badge){position:absolute;right:-1px;top:3px;width:16px;height:16px;border-radius:50%;background:#512da8;color:#fff;font:11px/16px Roboto,sans-serif;text-align:center}
</style><slot></slot><span class="i"></span>`);

define('task-bar',`<style>
:host{display:flex;box-sizing:border-box;height:47px;align-items:flex-start;padding-top:2px;border-top:1px solid #46403f;background:linear-gradient(90deg,#202123 0,#221f22 170px,#35141c 270px,#38151e 340px,#33191e 400px,#2c2021 520px,#2c2124 760px,#321a1c 900px,#3d1719 1010px,#351b1d 1180px,#38191c 1330px,#3a1b1e 1450px,#4a1913 1560px,#35202a 1650px,#34222a 1740px,#42191a 1800px,#232222 1890px);color:#fff;font:12px/16px ${UI}}
.w{display:flex;box-sizing:border-box;width:497px;padding:3px 0 0 19px;flex:none;align-items:flex-start;position:relative}
.w>ui-icon{margin-top:4px}
.n{position:absolute;left:30px;top:2px;width:16px;height:16px;border-radius:50%;background:#ff99a4;color:#1c1c1c;text-align:center;line-height:16px;font-size:11px}
.s{display:flex;box-sizing:border-box;width:220px;height:32px;margin:4px 0 0 4px;border:1px solid #5c5152;border-radius:16px;background:#463c3d;align-items:center;padding:0 8px 0 10px;font:14px/20px ${UI};color:#d0cccc;flex:none}
.apps{display:flex;flex:none}
.tray{display:flex;margin-left:auto;height:40px;align-items:center;padding-right:19px;flex:none}
.d{position:relative}.d b{position:absolute;left:1px;top:8px;width:9px;text-align:center;font:700 8px/9px "Noto Sans",sans-serif}
</style>
<div class="w"><ui-icon name="widgets" w="23"></ui-icon><span class="n">2</span><div style="margin-left:9px;padding-top:1px"><fit-text w="39" scale>أخبار لك</fit-text><fit-text w="98" scale right dir="rtl" style="color:#c5c2c3">ترامب يعفي الهواتـ...</fit-text></div></div>
<task-icon style="margin:0 0 0 24px"><ui-icon name="windows" w="24"></ui-icon></task-icon>
<div class="s"><ui-icon name="tsearch" w="17" style="margin-right:9px"></ui-icon><fit-text w="42">Search</fit-text><ui-icon name="castle" w="42" h="26" style="margin-left:auto"></ui-icon></div>
<div class="apps">
<task-icon style="margin-left:4px"><ui-icon name="taskview" w="24"></ui-icon></task-icon>
<task-icon run><ui-icon name="folder" w="24"></ui-icon></task-icon>
<task-icon><ui-icon name="ma" w="24"></ui-icon></task-icon>
<task-icon run style="background:#3f2a2d;box-shadow:inset 0 0 0 1px #4b3437;--ind:#f5836b;--iw:16px"><ui-icon name="edge" w="24"></ui-icon></task-icon>
<task-icon><ui-icon name="rockstar" w="24"></ui-icon></task-icon>
<task-icon><ui-icon name="chrome" w="24"></ui-icon></task-icon>
<task-icon><ui-icon name="gamepad" w="24"></ui-icon></task-icon>
<task-icon run style="background:#84454b;--ind:#ff99a4"><ui-icon name="xbox" w="24"></ui-icon></task-icon>
<task-icon run><ui-icon name="chrome" w="24"></ui-icon><span class="badge">h</span></task-icon>
<task-icon run><ui-icon name="vscode" w="24"></ui-icon></task-icon>
<task-icon run><ui-icon name="notepad" w="24"></ui-icon></task-icon>
<task-icon run><ui-icon name="photos" w="24"></ui-icon></task-icon>
<task-icon run><ui-icon name="snip" w="24"></ui-icon></task-icon>
<task-icon run><ui-icon name="mega" w="24"></ui-icon></task-icon>
</div>
<div class="tray"><ui-icon name="chev" w="14"></ui-icon><ui-icon name="megaoff" w="18" style="margin-left:16px"></ui-icon><div class="d" style="margin-left:14px"><ui-icon name="dropbox" w="18"></ui-icon><b>3</b></div><span style="margin-left:26px;width:8px;padding-top:2px">ع</span><ui-icon name="wifi" w="17" style="margin-left:25px"></ui-icon><ui-icon name="sound" w="17" style="margin-left:7px"></ui-icon><ui-icon name="battery" w="17" style="margin-left:7px"></ui-icon><div style="display:flex;flex-direction:column;align-items:flex-end;margin-left:16px"><fit-text w="44">4:41 AM</fit-text><fit-text w="55">4/13/2025</fit-text></div></div>`);

define('desktop-screen',`<style>
:host{display:flex;flex-direction:column;width:1920px;height:1080px;background:#3b3b3b;overflow:hidden}
.app{display:flex;height:954px;margin:0 4px 5px;border-radius:8px;overflow:hidden;flex:none}
</style><title-bar></title-bar><address-bar></address-bar><div class="app"><side-bar></side-bar><main-view></main-view></div><task-bar></task-bar>`);
</script>
</body>
</html>
